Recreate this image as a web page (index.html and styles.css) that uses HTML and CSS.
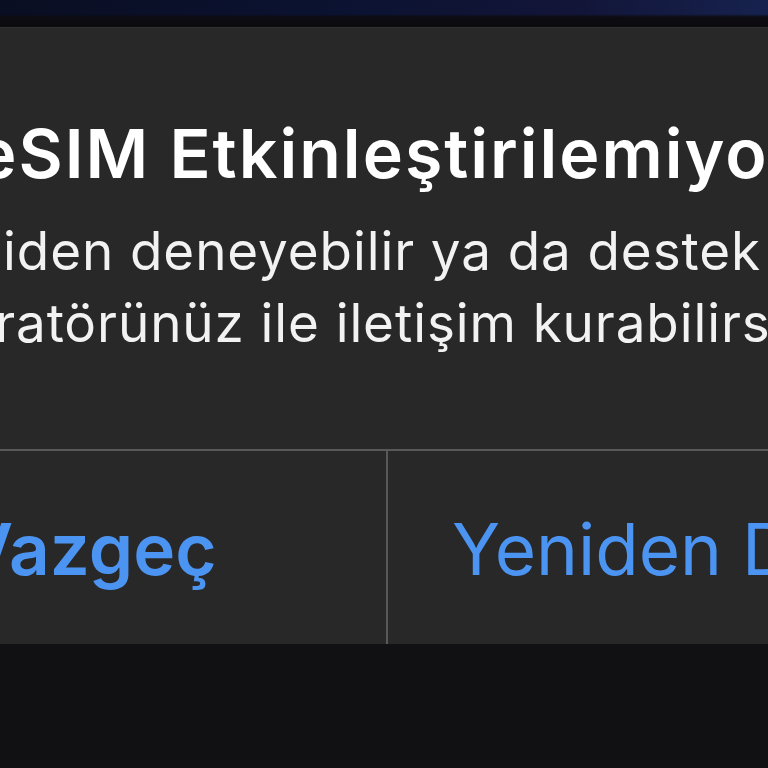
FILE: index.html
```html
<!DOCTYPE html>
<html lang="tr">
<head>
<meta charset="utf-8">
<title>eSIM</title>
<link rel="stylesheet" href="styles.css">
</head>
<body>
<div class="screen">
  <div class="wallpaper"></div>
  <div class="alert">
    <div class="content">
      <h1 class="title">eSIM Etkinleştirilemiyor</h1>
      <p class="message">
        <span class="line">Yeniden deneyebilir ya da destek için</span>
        <span class="line">operatörünüz ile iletişim kurabilirsiniz.</span>
      </p>
    </div>
    <div class="buttons">
      <button class="btn btn-cancel">Vazgeç</button>
      <button class="btn btn-retry">Yeniden Dene</button>
    </div>
  </div>
  <div class="below"></div>
</div>
</body>
</html>
```
FILE: styles.css
```css
html, body {
  margin: 0;
  padding: 0;
  background: #111113;
}
body {
  width: 768px;
  height: 768px;
  overflow: hidden;
  font-family: Inter, "Noto Sans", "Liberation Sans", sans-serif;
}
.screen {
  width: 768px;
  height: 768px;
  display: flex;
  flex-direction: column;
  overflow: hidden;
}
.wallpaper {
  height: 27px;
  flex: none;
  background:
    linear-gradient(180deg, rgba(0,0,0,0) 0px, rgba(0,0,0,0) 14px, #0c0c12 17px, #0a0a0f 27px),
    linear-gradient(90deg, #0a0e22 0%, #0b1230 40%, #121538 75%, #16224e 100%);
}
.alert {
  flex: none;
  width: 1190px;
  margin-left: -208px;
  background: #282828;
  border-top: 1px solid #303030;
  box-sizing: border-box;
  display: flex;
  flex-direction: column;
}
.content {
  padding: 85px 0 90px;
  text-align: center;
}
.title {
  margin: 0;
  font-size: 68px;
  line-height: 80px;
  font-weight: 600;
  letter-spacing: 2px;
  color: #ffffff;
  white-space: nowrap;
}
.message {
  margin: 22px 0 0;
  font-size: 53px;
  line-height: 72px;
  font-weight: 400;
  letter-spacing: 0.9px;
  color: #f2f2f2;
}
.line {
  display: block;
  white-space: nowrap;
}
.buttons {
  display: flex;
  border-top: 2px solid #595959;
  height: 193px;
}
.btn {
  flex: 1;
  background: none;
  border: none;
  margin: 0;
  padding: 4px 0 0;
  font-family: inherit;
  font-size: 71px;
  line-height: 189px;
  color: #4c94f2;
  white-space: nowrap;
  text-align: center;
}
.btn-cancel {
  font-weight: 600;
}
.btn-retry {
  font-weight: 400;
  border-left: 2px solid #595959;
}
.below {
  flex: 1;
  background: #111113;
}
```
